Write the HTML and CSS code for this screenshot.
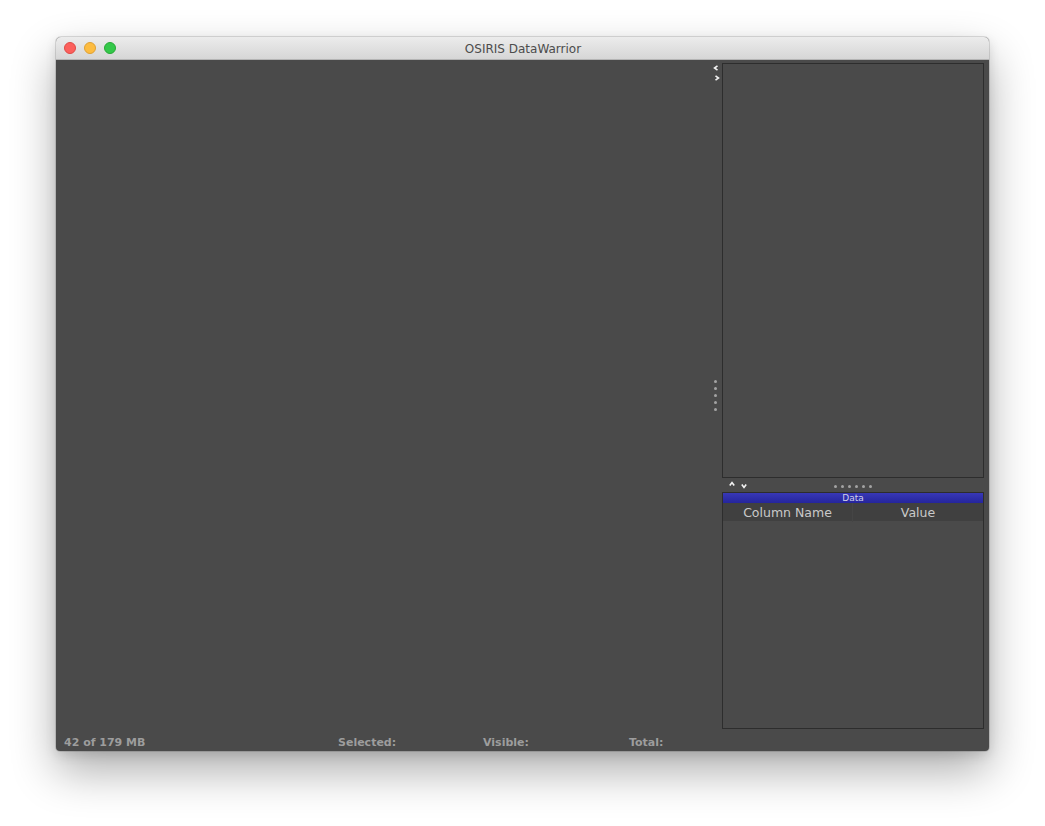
FILE: index.html
```html
<!DOCTYPE html>
<html>
<head>
<meta charset="utf-8">
<title>OSIRIS DataWarrior</title>
<link rel="stylesheet" href="styles.css">
</head>
<body>
<div class="window">
  <div class="titlebar">
    <div class="lights">
      <span class="light red"></span>
      <span class="light yellow"></span>
      <span class="light green"></span>
    </div>
    <div class="title">OSIRIS DataWarrior</div>
  </div>
  <div class="content">
    <div class="main"></div>
    <div class="splitter">
      <div class="split-arrows">
        <svg width="6" height="6" viewBox="0 0 6 6"><path d="M4.5 0.8 L1.5 3 L4.5 5.2" fill="none" stroke="#f2f2f2" stroke-width="1.6"/></svg>
        <svg width="6" height="6" viewBox="0 0 6 6"><path d="M1.5 0.8 L4.5 3 L1.5 5.2" fill="none" stroke="#f2f2f2" stroke-width="1.6"/></svg>
      </div>
      <div class="vdots">
        <span class="dot"></span><span class="dot"></span><span class="dot"></span><span class="dot"></span><span class="dot"></span>
      </div>
    </div>
    <div class="side">
      <div class="panel top-panel"></div>
      <div class="handle">
        <div class="handle-arrows">
          <svg width="6" height="6" viewBox="0 0 6 6"><path d="M0.8 4.5 L3 1.5 L5.2 4.5" fill="none" stroke="#f2f2f2" stroke-width="1.6"/></svg>
          <svg width="6" height="6" viewBox="0 0 6 6"><path d="M0.8 1.5 L3 4.5 L5.2 1.5" fill="none" stroke="#f2f2f2" stroke-width="1.6"/></svg>
        </div>
        <div class="hdots">
          <span class="dot"></span><span class="dot"></span><span class="dot"></span><span class="dot"></span><span class="dot"></span><span class="dot"></span>
        </div>
        <div></div>
      </div>
      <div class="panel data-panel">
        <div class="data-title">Data</div>
        <div class="table-head">
          <div class="th">Column Name</div>
          <div class="th">Value</div>
        </div>
      </div>
    </div>
  </div>
  <div class="status">
    <span class="mem">42 of 179 MB</span>
    <span>Selected:</span>
    <span>Visible:</span>
    <span>Total:</span>
  </div>
</div>
</body>
</html>
```

FILE: styles.css
```css
html, body {
  margin: 0;
  padding: 0;
  background: #ffffff;
}
html { height: 100%; }
body {
  min-height: 100%;
  box-sizing: border-box;
  padding: 37px 0 75px 56px;
  font-family: "DejaVu Sans", "Liberation Sans", sans-serif;
}
.window {
  width: 933px;
  height: 714px;
  display: flex;
  flex-direction: column;
  border-radius: 5px 5px 4px 4px;
  overflow: hidden;
  background: #4a4a4a;
  box-shadow: 0 0 0 1px rgba(0,0,0,0.12), 0 20px 45px rgba(0,0,0,0.32), 0 4px 12px rgba(0,0,0,0.12);
}
.titlebar {
  height: 22px;
  flex: none;
  position: relative;
  display: flex;
  align-items: center;
  justify-content: center;
  background: linear-gradient(#ececec, #d6d6d6);
  border-bottom: 1px solid #b4b4b4;
}
.lights {
  position: absolute;
  left: 8px;
  top: 5px;
  display: flex;
  gap: 8px;
}
.light {
  width: 12px;
  height: 12px;
  border-radius: 50%;
  box-sizing: border-box;
}
.red { background: #fc605c; border: 1px solid #de4a45; }
.yellow { background: #fdbc40; border: 1px solid #dea033; }
.green { background: #34c84a; border: 1px solid #27a935; }
.title {
  font-size: 12px;
  color: #4c4c4c;
  line-height: 22px;
  padding: 2px 0 0 1px;
}
.content {
  flex: 1;
  display: flex;
  min-height: 0;
}
.main {
  flex: 1;
}
.splitter {
  width: 12px;
  position: relative;
  display: flex;
  align-items: center;
  justify-content: center;
}
.split-arrows {
  position: absolute;
  left: 3px;
  top: 5px;
  display: flex;
  flex-direction: column;
  gap: 4px;
}
.split-arrows svg { display: block; }
.split-arrows svg:last-child { margin-left: 1px; }
.vdots {
  display: flex;
  flex-direction: column;
  gap: 4px;
  margin-left: -1px;
  margin-top: -1px;
}
.dot {
  width: 3px;
  height: 3px;
  border-radius: 50%;
  background: #a3a3a3;
  display: block;
}
.side {
  width: 262px;
  margin-right: 5px;
  padding: 3px 0 2px;
  display: flex;
  flex-direction: column;
}
.panel {
  border: 1px solid #2d2d2d;
  box-sizing: border-box;
}
.top-panel {
  flex: 1;
}
.handle {
  height: 14px;
  flex: none;
  display: grid;
  grid-template-columns: 1fr auto 1fr;
  align-items: center;
  padding-top: 1px;
  box-sizing: border-box;
}
.handle-arrows {
  display: flex;
  gap: 6px;
  padding-left: 7px;
}
.handle-arrows svg { display: block; }
.handle-arrows svg:first-child { margin-top: -2px; }
.hdots {
  display: flex;
  gap: 4px;
  margin-top: 1px;
}
.data-panel {
  height: 237px;
  flex: none;
}
.data-title {
  height: 10px;
  line-height: 10px;
  font-size: 9px;
  text-align: center;
  color: #d0d0ea;
  background: linear-gradient(#3838b6, #25259c);
}
.table-head {
  display: grid;
  grid-template-columns: 1fr 1fr;
  height: 18px;
  background: #404040;
}
.th {
  font-size: 12.5px;
  color: #c9c9c9;
  line-height: 19px;
  text-align: center;
}
.th:first-child {
  border-right: 1px solid #454545;
}
.status {
  height: 20px;
  flex: none;
  display: grid;
  grid-template-columns: 274px 145px 146px auto;
  padding-left: 8px;
  font-size: 11px;
  font-weight: bold;
  color: #9d9d9d;
  line-height: 24px;
}
```
